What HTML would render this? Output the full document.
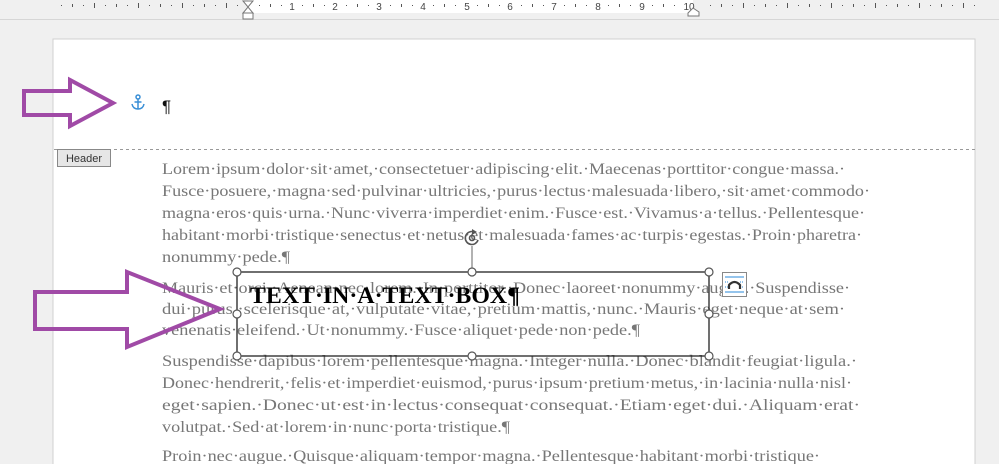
<!DOCTYPE html>
<html><head><meta charset="utf-8"><style>
html,body{margin:0;padding:0;width:999px;height:464px;overflow:hidden;background:#f0f0f0}
svg{display:block}
.t{font-family:"Liberation Serif",serif;font-size:16px;fill:#777}
.r{font-family:"Liberation Sans",sans-serif;font-size:10px;fill:#444}
</style></head><body>
<svg width="999" height="464" viewBox="0 0 999 464" xmlns="http://www.w3.org/2000/svg">
<rect x="0" y="0" width="999" height="464" fill="#f0f0f0"/>
<!-- ruler -->
<rect x="248" y="0" width="445" height="13" fill="#fff"/>
<line x1="0" y1="19.5" x2="999" y2="19.5" stroke="#d6d6d6"/>
<g fill="#555">
<rect x="61" y="5" width="1" height="1"/><rect x="72" y="4" width="1" height="3"/><rect x="83" y="5" width="1" height="1"/>
<rect x="105" y="5" width="1" height="1"/><rect x="116" y="4" width="1" height="3"/><rect x="127" y="5" width="1" height="1"/><rect x="138" y="3" width="1" height="5"/>
<rect x="149" y="5" width="1" height="1"/><rect x="160" y="4" width="1" height="3"/><rect x="171" y="5" width="1" height="1"/><rect x="182" y="3" width="1" height="5"/>
<rect x="193" y="5" width="1" height="1"/><rect x="204" y="4" width="1" height="3"/><rect x="215" y="5" width="1" height="1"/><rect x="226" y="3" width="1" height="5"/><rect x="237" y="5" width="1" height="1"/>
<rect x="94" y="3" width="1" height="5"/>
</g>
<g fill="#555">
<rect x="259" y="5" width="1" height="1"/><rect x="270" y="4" width="1" height="3"/><rect x="281" y="5" width="1" height="1"/>
<rect x="302" y="5" width="1" height="1"/><rect x="313" y="4" width="1" height="3"/><rect x="324" y="5" width="1" height="1"/>
<rect x="346" y="5" width="1" height="1"/><rect x="357" y="4" width="1" height="3"/><rect x="368" y="5" width="1" height="1"/>
<rect x="390" y="5" width="1" height="1"/><rect x="401" y="4" width="1" height="3"/><rect x="412" y="5" width="1" height="1"/>
<rect x="433" y="5" width="1" height="1"/><rect x="444" y="4" width="1" height="3"/><rect x="455" y="5" width="1" height="1"/>
<rect x="477" y="5" width="1" height="1"/><rect x="488" y="4" width="1" height="3"/><rect x="499" y="5" width="1" height="1"/>
<rect x="521" y="5" width="1" height="1"/><rect x="532" y="4" width="1" height="3"/><rect x="543" y="5" width="1" height="1"/>
<rect x="564" y="5" width="1" height="1"/><rect x="575" y="4" width="1" height="3"/><rect x="586" y="5" width="1" height="1"/>
<rect x="608" y="5" width="1" height="1"/><rect x="619" y="4" width="1" height="3"/><rect x="630" y="5" width="1" height="1"/>
<rect x="652" y="5" width="1" height="1"/><rect x="663" y="4" width="1" height="3"/><rect x="674" y="5" width="1" height="1"/>
</g>
<g fill="#555">
<rect x="710" y="5" width="1" height="1"/><rect x="721" y="4" width="1" height="3"/><rect x="732" y="5" width="1" height="1"/><rect x="743" y="3" width="1" height="5"/>
<rect x="754" y="5" width="1" height="1"/><rect x="765" y="4" width="1" height="3"/><rect x="776" y="5" width="1" height="1"/><rect x="787" y="3" width="1" height="5"/>
<rect x="798" y="5" width="1" height="1"/><rect x="809" y="4" width="1" height="3"/><rect x="820" y="5" width="1" height="1"/><rect x="831" y="3" width="1" height="5"/>
<rect x="842" y="5" width="1" height="1"/><rect x="853" y="4" width="1" height="3"/><rect x="864" y="5" width="1" height="1"/><rect x="875" y="3" width="1" height="5"/>
<rect x="886" y="5" width="1" height="1"/><rect x="897" y="4" width="1" height="3"/><rect x="908" y="5" width="1" height="1"/><rect x="919" y="3" width="1" height="5"/>
<rect x="930" y="5" width="1" height="1"/><rect x="941" y="4" width="1" height="3"/><rect x="952" y="5" width="1" height="1"/><rect x="963" y="3" width="1" height="5"/><rect x="974" y="5" width="1" height="1"/>
</g>
<g class="r" text-anchor="middle">
<text x="292" y="10">1</text><text x="335" y="10">2</text><text x="379" y="10">3</text><text x="423" y="10">4</text><text x="467" y="10">5</text>
<text x="510" y="10">6</text><text x="554" y="10">7</text><text x="598" y="10">8</text><text x="642" y="10">9</text><text x="689" y="10">10</text>
</g>
<path d="M243 1 L253 1 L248 7 Z M243 13 L253 13 L248 7 Z" fill="#fff" stroke="#777"/>
<rect x="243" y="13" width="10" height="6" fill="#fff" stroke="#777"/>
<path d="M688 13 L693 8 L699 12 L699 16 L688 16 Z" fill="#fff" stroke="#777"/>
<!-- page -->
<rect x="53" y="39" width="922" height="430" fill="#fff" stroke="#d0d0d0"/>
<line x1="54" y1="149.5" x2="975" y2="149.5" stroke="#999" stroke-dasharray="3,3"/>
<rect x="57.5" y="149.5" width="53" height="17" fill="#e6e6e6" stroke="#888"/>
<text x="84" y="162" text-anchor="middle" style="font-family:'Liberation Sans',sans-serif;font-size:11px;fill:#333">Header</text>
<!-- anchor -->
<g stroke="#3a8fd6" stroke-width="1.5" fill="none">
<circle cx="138" cy="97" r="2"/><line x1="138" y1="99" x2="138" y2="109"/><line x1="134.5" y1="102" x2="141.5" y2="102"/>
<path d="M132 104 Q133 109 138 109 Q143 109 144 104"/>
</g>
<text x="162" y="112" style="font-family:'Liberation Sans',sans-serif;font-size:17px;fill:#111">¶</text>
<!-- body text -->
<g class="t">
<text x="162" y="174" textLength="683" lengthAdjust="spacingAndGlyphs">Lorem·ipsum·dolor·sit·amet,·consectetuer·adipiscing·elit.·Maecenas·porttitor·congue·massa.·</text>
<text x="162" y="196" textLength="708" lengthAdjust="spacingAndGlyphs">Fusce·posuere,·magna·sed·pulvinar·ultricies,·purus·lectus·malesuada·libero,·sit·amet·commodo·</text>
<text x="162" y="218" textLength="703" lengthAdjust="spacingAndGlyphs">magna·eros·quis·urna.·Nunc·viverra·imperdiet·enim.·Fusce·est.·Vivamus·a·tellus.·Pellentesque·</text>
<text x="162" y="240" textLength="700" lengthAdjust="spacingAndGlyphs">habitant·morbi·tristique·senectus·et·netus·et·malesuada·fames·ac·turpis·egestas.·Proin·pharetra·</text>
<text x="162" y="262" textLength="128" lengthAdjust="spacingAndGlyphs">nonummy·pede.¶</text>
<text x="162" y="293" textLength="688" lengthAdjust="spacingAndGlyphs">Mauris·et·orci.·Aenean·nec·lorem.·In·porttitor.·Donec·laoreet·nonummy·augue.·Suspendisse·</text>
<text x="162" y="314" textLength="683" lengthAdjust="spacingAndGlyphs">dui·purus,·scelerisque·at,·vulputate·vitae,·pretium·mattis,·nunc.·Mauris·eget·neque·at·sem·</text>
<text x="162" y="335" textLength="478" lengthAdjust="spacingAndGlyphs">venenatis·eleifend.·Ut·nonummy.·Fusce·aliquet·pede·non·pede.¶</text>
<text x="162" y="366" textLength="695" lengthAdjust="spacingAndGlyphs">Suspendisse·dapibus·lorem·pellentesque·magna.·Integer·nulla.·Donec·blandit·feugiat·ligula.·</text>
<text x="162" y="388" textLength="690" lengthAdjust="spacingAndGlyphs">Donec·hendrerit,·felis·et·imperdiet·euismod,·purus·ipsum·pretium·metus,·in·lacinia·nulla·nisl·</text>
<text x="162" y="410" textLength="698" lengthAdjust="spacingAndGlyphs">eget·sapien.·Donec·ut·est·in·lectus·consequat·consequat.·Etiam·eget·dui.·Aliquam·erat·</text>
<text x="162" y="432" textLength="348" lengthAdjust="spacingAndGlyphs">volutpat.·Sed·at·lorem·in·nunc·porta·tristique.¶</text>
<text x="162" y="461" textLength="658" lengthAdjust="spacingAndGlyphs">Proin·nec·augue.·Quisque·aliquam·tempor·magna.·Pellentesque·habitant·morbi·tristique·</text>
</g>
<!-- text box -->
<rect x="237" y="272" width="472" height="84" fill="none" stroke="#222" stroke-width="1.3"/>
<text x="250" y="303" textLength="270" lengthAdjust="spacingAndGlyphs" style="font-family:'Liberation Serif',serif;font-size:23px;font-weight:bold;fill:#000">TEXT·IN·A·TEXT·BOX¶</text>
<line x1="472" y1="246" x2="472" y2="272" stroke="#666"/>
<g fill="none" stroke="#555" stroke-width="1.6">
<path d="M478 240 A6.5 6.5 0 1 1 472 231.5"/><circle cx="472" cy="238" r="2.5"/>
</g>
<path d="M472 229 L477 232 L472 235 Z" fill="#555"/>
<g fill="#fff" stroke="#555" stroke-width="1.2">
<circle cx="237" cy="272" r="4"/><circle cx="472" cy="272" r="4"/><circle cx="709" cy="272" r="4"/>
<circle cx="237" cy="314" r="4"/><circle cx="709" cy="314" r="4"/>
<circle cx="237" cy="356" r="4"/><circle cx="472" cy="356" r="4"/><circle cx="709" cy="356" r="4"/>
</g>
<!-- layout options -->
<rect x="722.5" y="272.5" width="24" height="24" fill="#fff" stroke="#888"/>
<g stroke="#2a8ad8" stroke-width="1"><line x1="725" y1="277" x2="744" y2="277"/><line x1="725" y1="292" x2="744" y2="292"/>
<line x1="725" y1="282" x2="729" y2="282" stroke-dasharray="1,1"/><line x1="740" y1="282" x2="744" y2="282" stroke-dasharray="1,1"/>
<line x1="725" y1="287" x2="729" y2="287" stroke-dasharray="1,1"/><line x1="740" y1="287" x2="744" y2="287" stroke-dasharray="1,1"/></g>
<path d="M729 289 L729 285 Q734.5 279 740 285 L740 289" fill="none" stroke="#333" stroke-width="2.2"/>
<!-- arrows -->
<path d="M24 91 L70 91 L70 80 L113 103 L70 126 L70 115 L24 115 Z" fill="none" stroke="#a04aa6" stroke-width="4" stroke-linejoin="miter"/>
<path d="M35 292 L127 292 L127 272 L220 309 L127 347 L127 329 L35 329 Z" fill="none" stroke="#a04aa6" stroke-width="4"/>
</svg>
</body></html>
